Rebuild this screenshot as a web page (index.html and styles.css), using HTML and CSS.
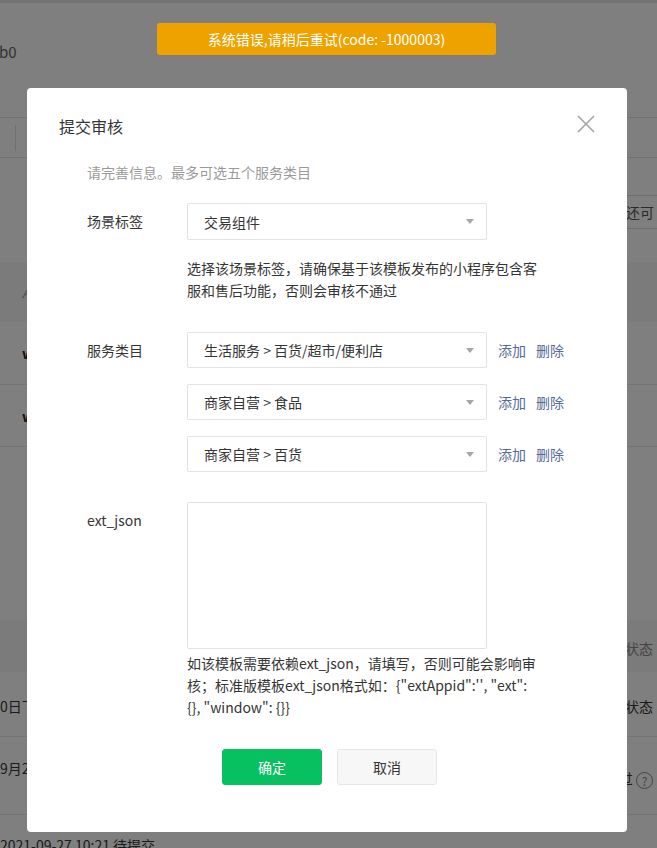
FILE: index.html
```html
<!DOCTYPE html>
<html lang="zh-CN">
<head>
<meta charset="utf-8">
<title>提交审核</title>
<link rel="stylesheet" href="styles.css">
</head>
<body>
<div class="page">
  <div class="topbar"></div>
  <div class="crumb">b0</div>
  <div class="toolbar"><span class="divider"></span></div>
  <div class="filter"><span class="filter-box">还可</span></div>
  <div class="thead"><span>A</span></div>
  <div class="trow"><span>w</span></div>
  <div class="trow"><span>w</span></div>
  <div class="gap-area"></div>
  <div class="thead2"><span></span><span class="muted">状态</span></div>
  <div class="trow2"><span>0日下</span><span>状态</span></div>
  <div class="trow3"><span>9月2</span><span class="pass">过 <i class="q">?</i></span></div>
  <div class="trow4"><span>2021-09-27 10:21 待提交</span></div>
</div>

<div class="toast">系统错误,请稍后重试(code: -1000003)</div>

<div class="mask">
  <div class="dialog">
    <div class="dialog-hd">
      <h3 class="dialog-title">提交审核</h3>
      <button class="close" aria-label="关闭">
        <svg width="18" height="18" viewBox="0 0 18 18"><path d="M1 1L17 17M17 1L1 17" stroke="#a3a3a3" stroke-width="1.6" fill="none"/></svg>
      </button>
    </div>
    <div class="dialog-bd">
      <p class="hint">请完善信息。最多可选五个服务类目</p>

      <div class="form-row row-scene">
        <label class="form-label lh37">场景标签</label>
        <div class="form-ctrl">
          <div class="select h37"><span>交易组件</span><i class="caret"></i></div>
          <p class="tips">选择该场景标签，请确保基于该模板发布的小程序包含客<br>服和售后功能，否则会审核不通过</p>
        </div>
      </div>

      <div class="form-row row-cat">
        <label class="form-label lh36">服务类目</label>
        <div class="form-ctrl cat-list">
          <div class="cat-item">
            <div class="select"><span>生活服务 &gt; 百货/超市/便利店</span><i class="caret"></i></div>
            <a class="link">添加</a><a class="link">删除</a>
          </div>
          <div class="cat-item">
            <div class="select"><span>商家自营 &gt; 食品</span><i class="caret"></i></div>
            <a class="link">添加</a><a class="link">删除</a>
          </div>
          <div class="cat-item">
            <div class="select"><span>商家自营 &gt; 百货</span><i class="caret"></i></div>
            <a class="link">添加</a><a class="link">删除</a>
          </div>
        </div>
      </div>

      <div class="form-row row-json">
        <label class="form-label lh36">ext_json</label>
        <div class="form-ctrl">
          <textarea class="textarea"></textarea>
          <p class="tips tips-json">如该模板需要依赖ext_json，请填写，否则可能会影响审<br>核；标准版模板ext_json格式如：{"extAppid":'', "ext":<br>{}, "window": {}}</p>
        </div>
      </div>

      <div class="btns">
        <button class="btn btn-primary">确定</button>
        <button class="btn btn-default">取消</button>
      </div>
    </div>
  </div>
</div>
</body>
</html>
```

FILE: styles.css
```css
* { box-sizing: border-box; }
html, body { margin: 0; padding: 0; }
body {
  width: 657px;
  height: 848px;
  overflow: hidden;
  font-family: "Noto Sans CJK SC", "Microsoft YaHei", sans-serif;
  font-size: 14px;
  color: #353535;
  background: #fff;
}

/* ---------- background page ---------- */
.page { width: 657px; }
.topbar { height: 3px; background: #e6e6e6; }
.crumb {
  height: 114px;
  padding-top: 37px;
  font-size: 15px;
  line-height: 24px;
  color: #666;
  margin-left: -1px;
}
.toolbar {
  height: 41px;
  border-top: 1px solid #e4e4e4;
  border-bottom: 1px solid #e4e4e4;
  display: flex;
  align-items: center;
}
.divider { display: block; width: 1px; height: 26px; background: #e0e0e0; margin-left: 15px; }
.filter {
  height: 104px;
  display: flex;
  justify-content: flex-end;
  padding-top: 37px;
}
.filter-box {
  width: 34px;
  height: 34px;
  border: 1px solid #dcdcdc;
  border-right: none;
  color: #555;
  line-height: 32px;
  padding-left: 2px;
  font-size: 14px;
}
.thead {
  height: 60px;
  background: #f6f6f6;
  padding-left: 22px;
  line-height: 60px;
  color: #999;
  font-style: italic;
}
.trow {
  height: 63px;
  border-bottom: 1px solid #e6e6e6;
  padding-left: 22px;
  line-height: 62px;
  font-weight: bold;
  color: #222;
}
.trow + .trow { height: 62px; }
.gap-area { height: 173px; }
.thead2, .trow2, .trow3, .trow4 {
  display: flex;
  justify-content: space-between;
  padding-right: 4px;
}
.thead2 { height: 52px; background: #f6f6f6; line-height: 56px; }
.muted { color: #888; }
.trow2 { height: 65px; line-height: 68px; border-bottom: 1px solid #e6e6e6; }
.trow3 { height: 78px; line-height: 62px; border-bottom: 1px solid #e6e6e6; }
.trow3 .pass { line-height: 82px; }
.q {
  display: inline-block;
  width: 17px; height: 17px;
  border: 1px solid #888;
  border-radius: 50%;
  font-style: normal;
  font-size: 12px;
  line-height: 15px;
  text-align: center;
  color: #888;
  vertical-align: middle;
}
.trow4 { height: 33px; line-height: 60px; }

/* ---------- toast ---------- */
.toast {
  position: fixed;
  top: 23px;
  left: 157px;
  width: 339px;
  height: 32px;
  background: #eda200;
  border-radius: 3px;
  color: #fff;
  text-align: center;
  line-height: 32px;
  font-size: 14px;
  z-index: 20;
}

/* ---------- mask & dialog ---------- */
.mask {
  position: fixed;
  inset: 0;
  background: rgba(0, 0, 0, 0.5);
  display: flex;
  align-items: flex-start;
  padding-left: 27px;
  padding-top: 88px;
  z-index: 10;
}
.dialog {
  width: 600px;
  background: #fff;
  border-radius: 4px;
  padding-bottom: 47px;
}
.dialog-hd {
  display: flex;
  justify-content: space-between;
  align-items: center;
  padding: 26px 32px 0 32px;
}
.dialog-title {
  margin: 0;
  font-size: 16px;
  font-weight: normal;
  line-height: 24px;
  color: #353535;
}
.close {
  border: 0;
  background: none;
  padding: 0;
  width: 18px;
  height: 18px;
  margin-top: -4px;
  display: block;
}
.close svg { display: block; }

.dialog-bd { padding: 0 32px 0 60px; }
.hint {
  margin: 23px 0 0 0;
  line-height: 22px;
  color: #9a9a9a;
  font-size: 14px;
}

.form-row { display: flex; align-items: flex-start; }
.row-scene { margin-top: 20px; }
.row-cat { margin-top: 31px; }
.row-json { margin-top: 30px; }
.form-label { width: 100px; flex: none; color: #353535; }
.lh37 { line-height: 37px; }
.lh36 { line-height: 36px; }
.form-ctrl { flex: 1; }

.select {
  width: 300px;
  height: 36px;
  border: 1px solid #e2e2e2;
  border-radius: 2px;
  padding: 0 16px;
  display: flex;
  align-items: center;
  justify-content: space-between;
  color: #353535;
  background: #fff;
  flex: none;
}
.select.h37 { height: 37px; }
.caret {
  width: 0; height: 0;
  border-left: 4px solid transparent;
  border-right: 4px solid transparent;
  border-top: 5px solid #a6a6a6;
  margin-right: -4px;
}
.tips {
  margin: 17px 0 0 0;
  line-height: 22px;
  color: #353535;
  font-size: 14px;
  white-space: nowrap;
}
.tips-json { margin-top: 3px; }

.cat-list { display: flex; flex-direction: column; gap: 16px; }
.cat-item { display: flex; align-items: center; }
.link { color: #576b95; margin-left: 10px; cursor: pointer; }
.cat-item .link:first-of-type { margin-left: 11px; }

.textarea {
  display: block;
  width: 300px;
  height: 147px;
  border: 1px solid #e2e2e2;
  border-radius: 2px;
  resize: none;
  margin: 0;
  outline: none;
}

.btns {
  display: flex;
  justify-content: center;
  gap: 15px;
  margin: 31px 0 0 -23px;
}
.btn {
  width: 100px;
  height: 36px;
  border-radius: 3px;
  font-family: inherit;
  font-size: 14px;
  padding: 0;
}
.btn-primary { background: #07c160; border: 1px solid #07c160; color: #fff; }
.btn-default { background: #f7f7f7; border: 1px solid #e6e6e6; color: #353535; }
```
